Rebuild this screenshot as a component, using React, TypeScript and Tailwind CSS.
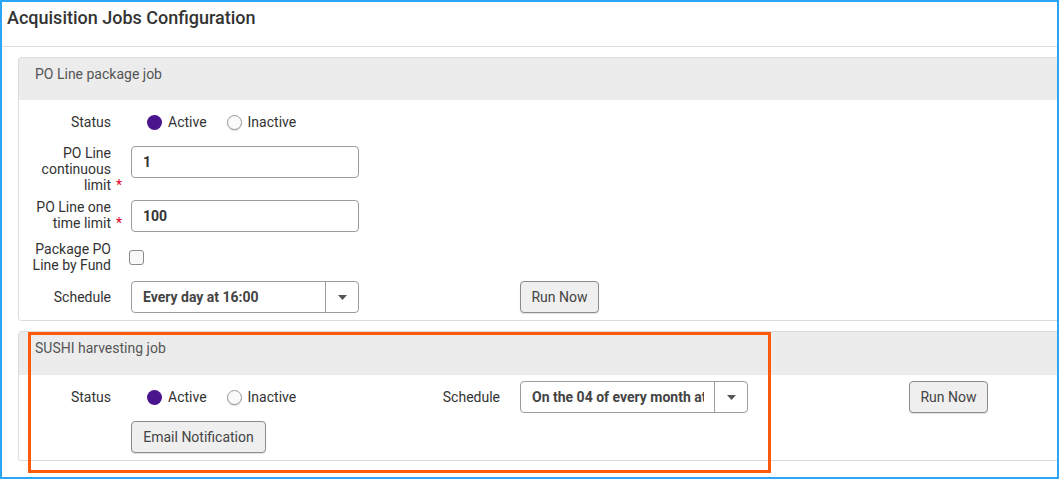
import React from "react";

const font = { fontFamily: "Roboto, 'Liberation Sans', Arial, sans-serif" };

function Radio({ checked, label }: { checked: boolean; label: string }) {
  return (
    <div className="flex items-center">
      {checked ? (
        <span className="block w-[15px] h-[15px] rounded-full bg-[#4a148c]" />
      ) : (
        <span className="block w-[15px] h-[15px] rounded-full border border-[#9a9a9a] bg-[#fafafa] shadow-[0_1px_1px_rgba(0,0,0,0.15)]" />
      )}
      <span className="ml-[6px] text-[14px] leading-5 text-[#333]">{label}</span>
    </div>
  );
}

function Label({ children }: { children: React.ReactNode }) {
  return (
    <div className="w-[80px] shrink-0 text-right text-[14px] leading-4 text-[#333]">{children}</div>
  );
}

function Req({ text }: { text: string }) {
  return (
    <span className="relative">
      {text}
      <span className="absolute left-full top-0 ml-[5px] text-[#e4002b]">*</span>
    </span>
  );
}

function TextInput({ value }: { value: string }) {
  return (
    <div className="w-[228px] h-[32px] shrink-0 rounded-[4px] border border-[#9c9c9c] bg-white flex items-center pl-[11px] text-[14px] font-bold text-[#333]">
      {value}
    </div>
  );
}

function Select({ value }: { value: string }) {
  return (
    <div className="w-[228px] h-[32px] shrink-0 rounded-[4px] border border-[#9c9c9c] bg-white flex items-stretch">
      <div className="flex-1 min-w-0 flex items-center pl-[11px] pr-[10px]">
        <div className="overflow-hidden whitespace-nowrap text-[14px] font-bold text-[#444]">{value}</div>
      </div>
      <div className="w-[33px] border-l border-[#9c9c9c] flex items-center justify-center">
        <svg width="9" height="5" viewBox="0 0 9 5">
          <path d="M0 0 L9 0 L4.5 5 Z" fill="#555" />
        </svg>
      </div>
    </div>
  );
}

function Button({ children, w }: { children: React.ReactNode; w: string }) {
  return (
    <div
      className={`${w} h-[32px] shrink-0 rounded-[4px] border border-[#8c8c8c] bg-[#efefef] shadow-[0_1px_1px_rgba(0,0,0,0.12)] flex items-center justify-center text-[14px] text-[#444]`}
    >
      {children}
    </div>
  );
}

function Group({ label, children }: { label?: React.ReactNode; children?: React.ReactNode }) {
  return (
    <div className="w-[389px] shrink-0 flex items-center gap-[20px]">
      <Label>{label}</Label>
      {children}
    </div>
  );
}

export default function App() {
  return (
    <div style={font} className="relative w-[1059px] h-[479px] border-2 border-[#2ca5f5] bg-white overflow-hidden">
      <div className="h-[45px] border-b border-[#dedede] pl-[5px] pt-[4px]">
        <h1 className="text-[18px] leading-6 font-medium text-[#333]">Acquisition Jobs Configuration</h1>
      </div>

      <div className="pl-[16px] pt-[10px] flex flex-col gap-[10px]">
        {/* Panel 1 */}
        <div className="w-[1100px] border border-[#dcdcdc] rounded-[3px]">
          <div className="h-[42px] bg-[#ececec] pl-[16px] pt-[6px] text-[14px] leading-5 text-[#555]">
            PO Line package job
          </div>
          <div className="pl-[12px] pt-[12px] pb-[7px] flex flex-col">
            <div className="flex items-center h-[20px]">
              <Group label="Status">
                <div className="flex items-center pl-[16px] gap-[20px]">
                  <Radio checked label="Active" />
                  <Radio checked={false} label="Inactive" />
                </div>
              </Group>
            </div>

            <div className="flex items-start mt-[13px] gap-[20px]">
              <Label>
                PO Line continuous <Req text="limit" />
              </Label>
              <div className="mt-[1px]">
                <TextInput value="1" />
              </div>
            </div>

            <div className="flex items-start mt-[6px] gap-[20px]">
              <Label>
                PO Line one time <Req text="limit" />
              </Label>
              <div className="mt-[1px]">
                <TextInput value="100" />
              </div>
            </div>

            <div className="flex items-center mt-[9px] gap-[18px]">
              <Label>Package PO Line by Fund</Label>
              <span className="block w-[15px] h-[15px] rounded-[3px] border border-[#8a8a8a] bg-[#f8f8f8]" />
            </div>

            <div className="flex items-center mt-[8px]">
              <Group label="Schedule">
                <Select value="Every day at 16:00" />
              </Group>
              <Group>
                <Button w="w-[79px]">Run Now</Button>
              </Group>
            </div>
          </div>
        </div>

        {/* Panel 2 */}
        <div className="w-[1100px] border border-[#dcdcdc] rounded-[3px]">
          <div className="h-[43px] bg-[#ececec] pl-[16px] pt-[6px] text-[14px] leading-5 text-[#555]">
            SUSHI harvesting job
          </div>
          <div className="pl-[12px] pt-[6px] pb-[7px] flex flex-col">
            <div className="flex items-center h-[32px]">
              <Group label="Status">
                <div className="flex items-center pl-[16px] gap-[20px]">
                  <Radio checked label="Active" />
                  <Radio checked={false} label="Inactive" />
                </div>
              </Group>
              <Group label="Schedule">
                <Select value="On the 04 of every month at 02:00" />
              </Group>
              <Group>
                <Button w="w-[79px]">Run Now</Button>
              </Group>
            </div>
            <div className="flex items-center mt-[8px]">
              <Group>
                <Button w="w-[135px]">Email Notification</Button>
              </Group>
            </div>
          </div>
        </div>
      </div>

      <div className="absolute left-[26px] top-[330px] w-[743px] h-[141px] border-[3px] border-[#fd5a0b] pointer-events-none" />
    </div>
  );
}
